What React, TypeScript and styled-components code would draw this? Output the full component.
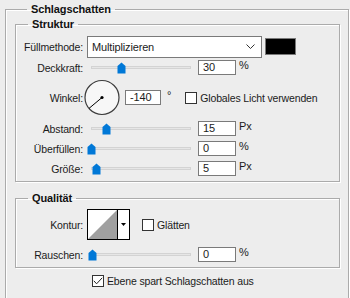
import React from 'react'
import styled, { createGlobalStyle } from 'styled-components'

const GlobalStyle = createGlobalStyle`
  body {
    margin: 0;
    background: #ededed;
    font-family: "Liberation Sans", Arial, sans-serif;
    font-size: 10.5px;
    letter-spacing: -0.15px;
    color: #1b1b1b;
  }
`

const Group = styled.fieldset<{ $mt?: number }>`
  margin: ${p => p.$mt ?? 0}px 0 0 0;
  padding: 0 0 5px 0;
  border: 1px solid #ababab;
  box-shadow: 1px 1px 0 #ffffff, inset 1px 1px 0 #ffffff;
  min-width: 0;
`

const Outer = styled(Group)`
  margin: 2px 1px 0 5px;
  padding: 0 8px 20px 9px;
`

const Legend = styled.legend<{ $ml: number }>`
  margin-left: ${p => p.$ml}px;
  padding: 0 4px;
  font-weight: 700;
  font-size: 11px;
  letter-spacing: -0.1px;
  line-height: 14px;
  color: #111;
`

const Row = styled.div<{ $mt: number; $h: number }>`
  display: flex;
  align-items: center;
  margin-top: ${p => p.$mt}px;
  height: ${p => p.$h}px;
`

const Label = styled.span`
  width: 67px;
  flex: none;
  text-align: right;
  white-space: nowrap;
`

const Select = styled.div`
  margin-left: 4px;
  width: 175px;
  height: 22px;
  background: #fff;
  border: 1px solid #7a7a7a;
  display: flex;
  align-items: center;
  justify-content: space-between;
  padding: 0 6px 0 4px;
  box-sizing: border-box;
  font-size: 11px;
`

const Swatch = styled.div`
  margin-left: 3px;
  width: 29px;
  height: 15px;
  background: #000;
  border: 1px solid #7a7a7a;
`

const SliderBox = styled.div`
  position: relative;
  margin-left: 4px;
  width: 108px;
  height: 15px;
  flex: none;
`

const Track = styled.div`
  position: absolute;
  left: 4px;
  right: 4px;
  top: 6px;
  height: 3px;
  box-sizing: border-box;
  background: #e6e6e6;
  border: 1px solid #d3d3d3;
`

const Thumb = styled.svg`
  position: absolute;
  top: 2px;
`

const Input = styled.div<{ $w?: number; $ml?: number }>`
  margin-left: ${p => p.$ml ?? 3}px;
  width: ${p => p.$w ?? 38}px;
  height: 15px;
  flex: none;
  box-sizing: border-box;
  background: #fff;
  border: 1px solid #7a7a7a;
  padding-left: 4px;
  font-size: 11px;
  line-height: 13px;
`

const Unit = styled.span<{ $ml?: number }>`
  margin-left: ${p => p.$ml ?? 3}px;
  margin-bottom: 4px;
  line-height: 13px;
  font-size: 11px;
`

const Check = styled.span<{ $ml?: number }>`
  display: inline-flex;
  align-items: center;
  justify-content: center;
  margin-left: ${p => p.$ml ?? 0}px;
  width: 12px;
  height: 12px;
  box-sizing: border-box;
  background: #fff;
  border: 1px solid #333;
  flex: none;
`

const CheckText = styled.span`
  margin-left: 3px;
  white-space: nowrap;
`

const Contour = styled.div`
  margin-left: 4px;
  display: flex;
  width: 43px;
  height: 31px;
  box-sizing: border-box;
  border: 1px solid #000;
  background: #fff;
`

const ContourArrow = styled.div`
  flex: 1;
  border-left: 1px solid #000;
  display: flex;
  align-items: center;
  justify-content: center;
`

const Footer = styled.div`
  display: flex;
  align-items: center;
  margin-top: 7px;
  padding-left: 77px;
  height: 12px;
`

const Slider: React.FC<{ value: number }> = ({ value }) => (
  <SliderBox>
    <Track />
    <Thumb width="9" height="12" viewBox="0 0 9 12" style={{ left: 4 + value - 4.5 }}>
      <path d="M0.5 4 L4.5 0.5 L8.5 4 L8.5 11.5 L0.5 11.5 Z" fill="#0078d7" />
    </Thumb>
  </SliderBox>
)

const Dial: React.FC<{ angle: number }> = ({ angle }) => {
  const r = 17
  const a = (angle * Math.PI) / 180
  const cx = 18
  const cy = 18.5
  return (
    <svg width="36" height="37" viewBox="0 0 36 37" style={{ marginLeft: 1 }}>
      <circle cx={cx} cy={cy} r={r} fill="#f7f7f7" stroke="#3c3c3c" strokeWidth="1.2" />
      <line x1={cx} y1={cy} x2={cx + Math.cos(a) * r} y2={cy - Math.sin(a) * r} stroke="#000" strokeWidth="1" />
      <circle cx={cx} cy={cy} r="1.6" fill="#000" />
    </svg>
  )
}

export default function App() {
  return (
    <>
      <GlobalStyle />
      <Outer>
        <Legend $ml={12}>Schlagschatten</Legend>
        <Group $mt={1}>
          <Legend $ml={12}>Struktur</Legend>
          <Row $mt={4} $h={23}>
            <Label>Füllmethode:</Label>
            <Select>
              <span>Multiplizieren</span>
              <svg width="9" height="5" viewBox="0 0 9 5">
                <path d="M0.5 0.5 L4.5 4.5 L8.5 0.5" fill="none" stroke="#333" strokeWidth="1" />
              </svg>
            </Select>
            <Swatch />
          </Row>
          <Row $mt={2} $h={15}>
            <Label>Deckkraft:</Label>
            <Slider value={30} />
            <Input>30</Input>
            <Unit>%</Unit>
          </Row>
          <Row $mt={4} $h={37}>
            <Label>Winkel:</Label>
            <Dial angle={-140} />
            <Input $w={36} $ml={5}>-140</Input>
            <Unit $ml={6}>°</Unit>
            <Check $ml={14} />
            <CheckText>Globales Licht verwenden</CheckText>
          </Row>
          <Row $mt={5} $h={15}>
            <Label>Abstand:</Label>
            <Slider value={15} />
            <Input>15</Input>
            <Unit>Px</Unit>
          </Row>
          <Row $mt={5} $h={15}>
            <Label>Überfüllen:</Label>
            <Slider value={0} />
            <Input>0</Input>
            <Unit>%</Unit>
          </Row>
          <Row $mt={5} $h={15}>
            <Label>Größe:</Label>
            <Slider value={5} />
            <Input>5</Input>
            <Unit>Px</Unit>
          </Row>
        </Group>
        <Group $mt={9}>
          <Legend $ml={12}>Qualität</Legend>
          <Row $mt={4} $h={31}>
            <Label>Kontur:</Label>
            <Contour>
              <svg width="29" height="29" viewBox="0 0 29 29">
                <path d="M0 29 L29 0 L29 29 Z" fill="#a0a0a0" />
              </svg>
              <ContourArrow>
                <svg width="5" height="3" viewBox="0 0 5 3">
                  <path d="M0 0 L5 0 L2.5 3 Z" fill="#000" />
                </svg>
              </ContourArrow>
            </Contour>
            <Check $ml={12} />
            <CheckText>Glätten</CheckText>
          </Row>
          <Row $mt={7} $h={15}>
            <Label>Rauschen:</Label>
            <Slider value={1} />
            <Input>0</Input>
            <Unit>%</Unit>
          </Row>
        </Group>
        <Footer>
          <Check>
            <svg width="10" height="8" viewBox="0 0 10 8">
              <path d="M0.8 3.8 L3.6 6.8 L9.2 0.8" fill="none" stroke="#222" strokeWidth="1" />
            </svg>
          </Check>
          <CheckText>Ebene spart Schlagschatten aus</CheckText>
        </Footer>
      </Outer>
    </>
  )
}
